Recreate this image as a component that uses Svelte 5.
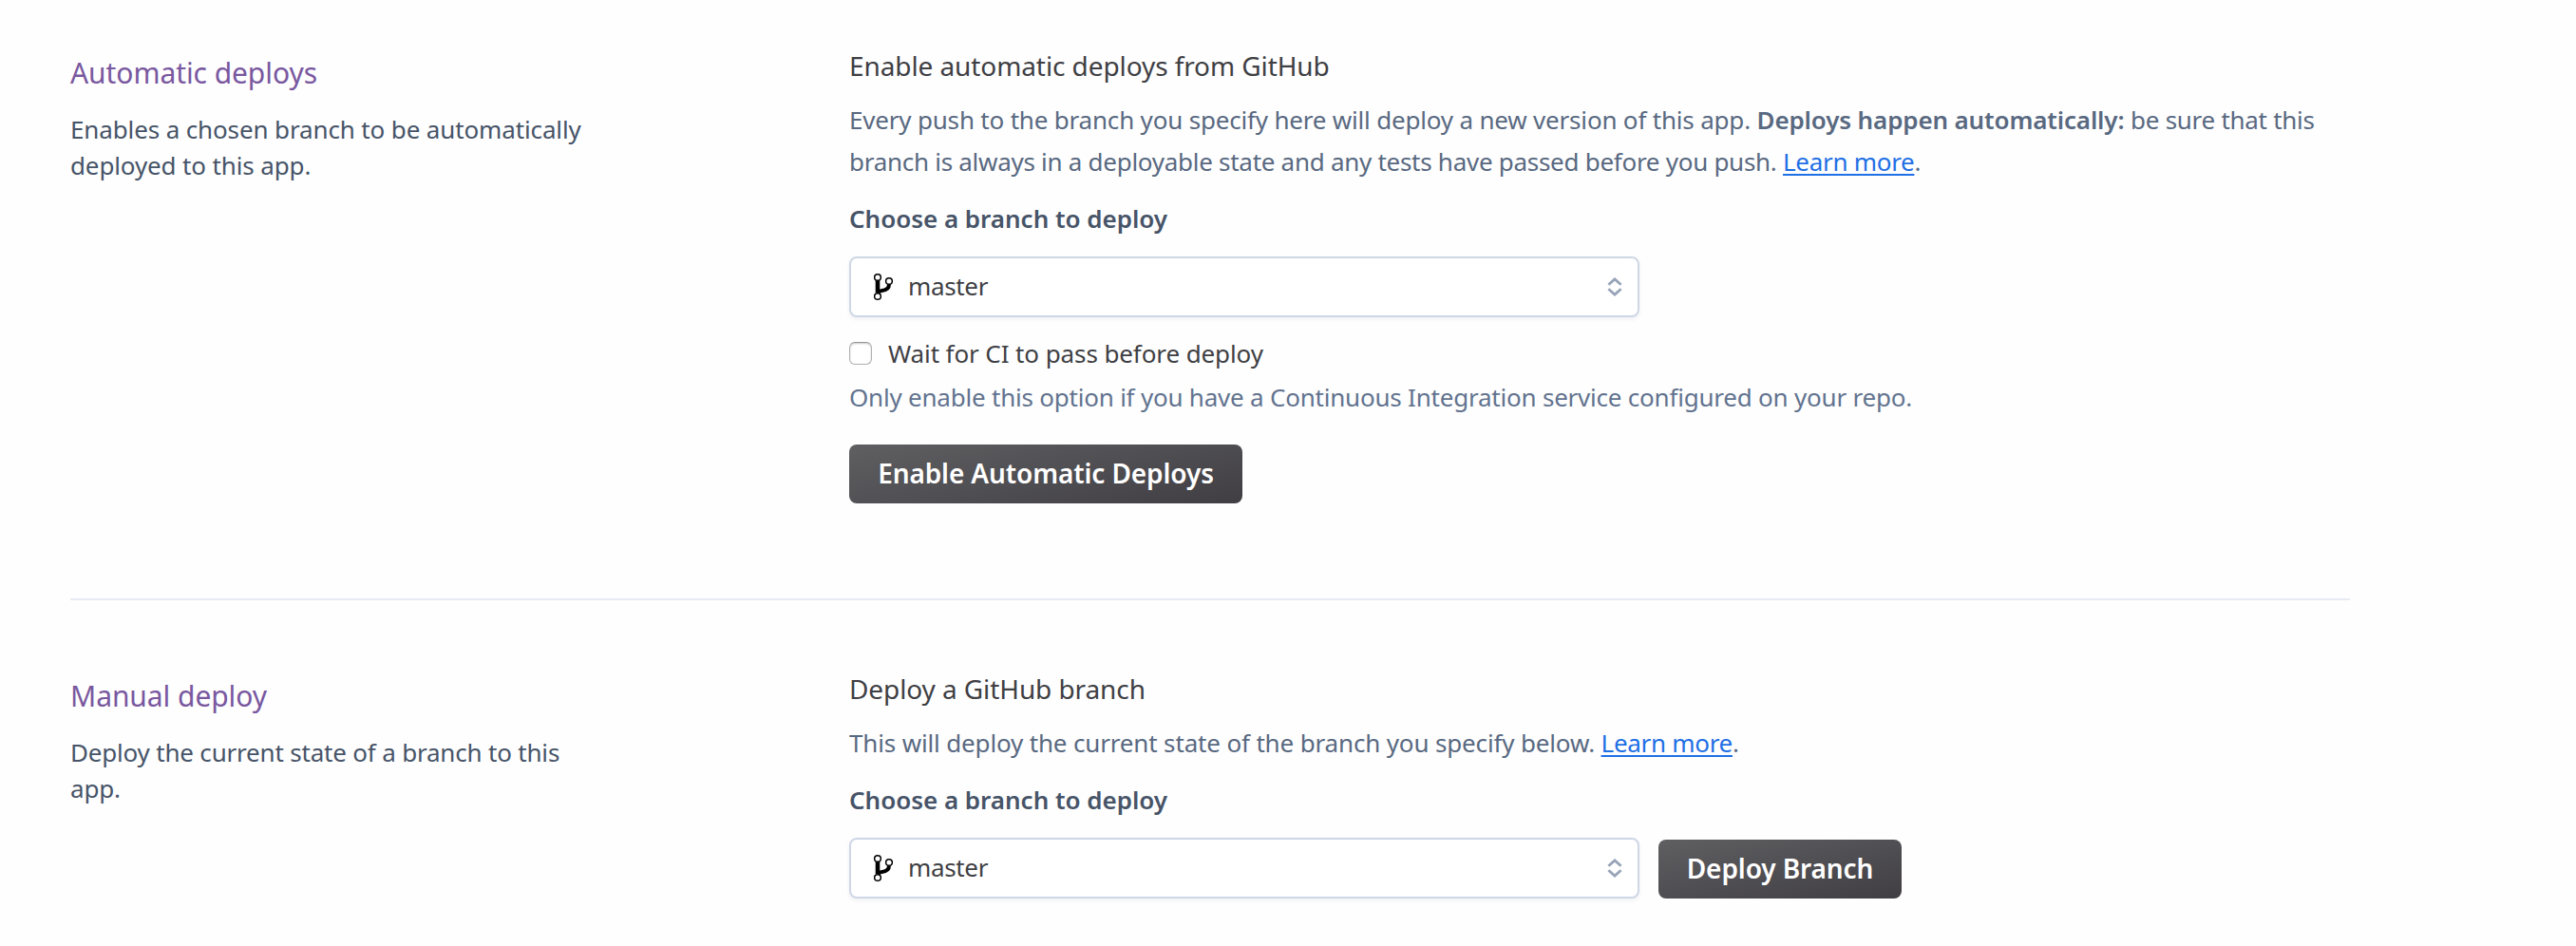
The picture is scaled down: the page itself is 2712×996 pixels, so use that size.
<script>
  let waitForCi = $state(false);
</script>

{#snippet branchSelect()}
  <div class="select" role="combobox" aria-expanded="false" aria-controls="branches" tabindex="0">
    <svg class="git" width="22" height="30" viewBox="0 0 22 30" fill="none" stroke="#000">
      <path d="M5 8V21" stroke-width="4.6" />
      <path d="M17 12.2C17 17.4 13.2 18.6 9.5 18.9C7.4 19.1 6 20 5 21.2" stroke-width="4" />
      <g fill="#fff" stroke-width="1.5">
        <circle cx="5" cy="5" r="3.35" />
        <circle cx="17" cy="9" r="3.35" />
        <circle cx="5" cy="25" r="3.35" />
      </g>
    </svg>
    <span class="value">master</span>
    <svg class="arrows" width="16" height="22" viewBox="0 0 16 22" fill="none" stroke="#97a4b8" stroke-width="2.8">
      <path d="M1.4 8.7L8 2.9L14.6 8.7M1.4 13.3L8 19.1L14.6 13.3" />
    </svg>
  </div>
{/snippet}

<main>
  <section>
    <aside>
      <h2>Automatic deploys</h2>
      <p>Enables a chosen branch to be automatically<br />deployed to this app.</p>
    </aside>
    <div class="content">
      <h3>Enable automatic deploys from GitHub</h3>
      <p class="info">
        Every push to the branch you specify here will deploy a new version of this app.
        <strong>Deploys happen automatically:</strong> <span class="tight">be sure that this</span><br />
        <span class="tight">branch is always in a deployable state and any tests have passed before you push. <span class="link">Learn more</span>.</span>
      </p>
      <h4>Choose a branch to deploy</h4>
      {@render branchSelect()}
      <label>
        <input type="checkbox" bind:checked={waitForCi} />
        <span>Wait for CI to pass before deploy</span>
      </label>
      <p class="hint">Only enable this option if you have a Continuous Integration service configured on your repo.</p>
      <button class="enable">Enable Automatic Deploys</button>
    </div>
  </section>
  <section class="manual">
    <aside>
      <h2>Manual deploy</h2>
      <p class="narrow">Deploy the current state of a branch to this<br />app.</p>
    </aside>
    <div class="content">
      <h3>Deploy a GitHub branch</h3>
      <p class="info loose">This will deploy the current state of the branch you specify below. <span class="link">Learn more</span>.</p>
      <h4>Choose a branch to deploy</h4>
      <div class="row">
        {@render branchSelect()}
        <button class="deploy">Deploy Branch</button>
      </div>
    </div>
  </section>
</main>

<style>
  :global(body) {
    background: #fefefe;
  }
  main {
    box-sizing: border-box;
    height: 996px;
    overflow: hidden;
    padding-left: 74px;
    font: 400 26px/38px 'Noto Sans', 'Open Sans', sans-serif;
    color: #475468;
  }
  section {
    display: grid;
    grid-template-columns: 820px 1579px;
    box-sizing: border-box;
    width: 2400px;
    height: 632px;
    border-bottom: 2px solid #e7eaf3;
    white-space: nowrap;
  }
  .manual {
    height: 364px;
    padding-top: 24px;
    border: 0;
  }
  h2, h3, h4, p {
    margin: 0;
  }
  aside {
    padding-top: 57px;
  }
  h2 {
    margin-bottom: 20px;
    font-size: 30px;
    font-weight: 400;
    line-height: 40px;
    letter-spacing: -0.07px;
    color: #79589f;
  }
  aside p {
    letter-spacing: -0.13px;
  }
  aside .narrow {
    letter-spacing: -0.19px;
  }
  .content {
    padding-top: 49px;
  }
  h3 {
    font-size: 28px;
    font-weight: 400;
    line-height: 40px;
    letter-spacing: -0.09px;
    color: #3f3f44;
  }
  .info {
    margin-top: 15px;
    line-height: 44px;
    letter-spacing: -0.19px;
    color: #596981;
  }
  .loose {
    letter-spacing: -0.155px;
  }
  .info strong {
    font-weight: 600;
    letter-spacing: -0.14px;
  }
  .tight {
    letter-spacing: -0.28px;
  }
  .link {
    color: #1f6fe5;
    letter-spacing: -0.3px;
    text-decoration: underline;
    text-decoration-thickness: 2px;
    text-underline-offset: 3px;
    text-decoration-skip-ink: none;
  }
  h4 {
    margin: 18px 0 20px;
    font-size: 26px;
    font-weight: 600;
    line-height: 40px;
    letter-spacing: -0.02px;
  }
  .select {
    display: flex;
    align-items: center;
    box-sizing: border-box;
    width: 832px;
    height: 64px;
    padding: 0 16px 0 23px;
    background: #fff;
    border: 2px solid #cfd7e6;
    border-radius: 8px;
    box-shadow: 0 2px 4px rgba(40, 60, 90, 0.07);
    color: #3f3f44;
  }
  .value {
    margin: -3px auto 0 15px;
    letter-spacing: -0.35px;
  }
  label {
    display: flex;
    align-items: center;
    height: 40px;
    margin-top: 18px;
    letter-spacing: -0.1px;
    color: #3f3f44;
  }
  input {
    appearance: none;
    box-sizing: border-box;
    width: 24px;
    height: 24px;
    margin: 0 17px 0 0;
    background: #fff;
    border: 1px solid #b0b0b0;
    border-top-color: #969696;
    border-radius: 6px;
    box-shadow: inset 0 1px 2px rgba(0, 0, 0, 0.22);
  }
  .hint {
    margin-top: 4px;
    line-height: 44px;
    letter-spacing: -0.215px;
    color: #62738f;
  }
  button {
    display: block;
    height: 62px;
    padding: 0 0 2px;
    border: 0;
    border-radius: 8px;
    background: linear-gradient(168deg, #5f5f62, #403e43);
    color: #fff;
    font: 600 28px/60px 'Noto Sans', 'Open Sans', sans-serif;
  }
  .enable {
    width: 414px;
    margin-top: 28px;
    letter-spacing: -0.11px;
  }
  .row {
    display: flex;
    align-items: flex-end;
    gap: 20px;
  }
  .deploy {
    width: 256px;
    letter-spacing: -0.1px;
  }
</style>
